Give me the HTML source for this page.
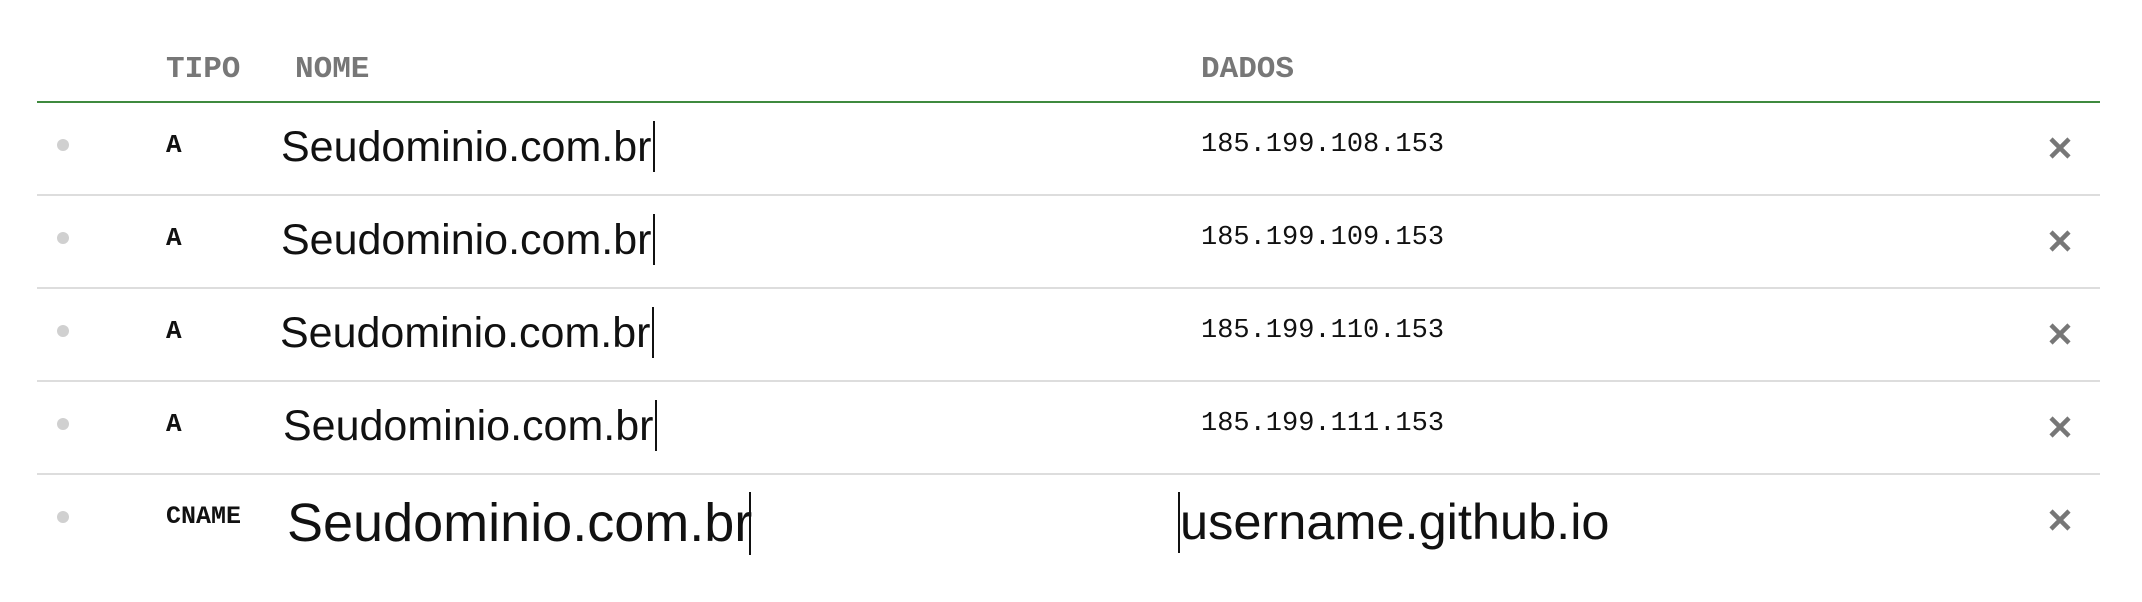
<!DOCTYPE html>
<html><head><meta charset="utf-8"><style>
html,body{margin:0;padding:0;background:#fff;width:2142px;height:602px;overflow:hidden;position:relative}
.a{position:absolute;line-height:1;white-space:nowrap}
.h{font-family:"Liberation Mono",monospace;font-weight:bold;font-size:31px;color:#777;top:54px}
.t{font-family:"Liberation Mono",monospace;font-weight:bold;font-size:26px;color:#111;left:166px}
.n{font-family:"Liberation Sans",sans-serif;font-size:43px;color:#111}
.ip{font-family:"Liberation Mono",monospace;font-size:27px;color:#111;left:1201px}
.line{position:absolute;left:37px;width:2063px;height:2px;background:#ddd}
.dot{position:absolute;left:57px;width:12px;height:12px;border-radius:50%;background:#d0d0d0}
.cur{position:absolute;width:2px;background:#111}
.x{position:absolute;left:2048px;width:24px;height:24px}
</style></head><body>
<div class="a h" style="left:166px">TIPO</div>
<div class="a h" style="left:295px">NOME</div>
<div class="a h" style="left:1201px">DADOS</div>
<div class="line" style="top:101px;background:#3f8a3f"></div>
<div class="line" style="top:194px"></div>
<div class="line" style="top:287px"></div>
<div class="line" style="top:380px"></div>
<div class="line" style="top:473px"></div>

<div class="dot" style="top:139px"></div>
<div class="dot" style="top:232px"></div>
<div class="dot" style="top:325px"></div>
<div class="dot" style="top:418px"></div>
<div class="dot" style="top:511px"></div>

<div class="a t" style="top:132px">A</div>
<div class="a t" style="top:225px">A</div>
<div class="a t" style="top:318px">A</div>
<div class="a t" style="top:411px">A</div>
<div class="a t" style="top:504px;font-size:25px">CNAME</div>

<div class="a n" style="left:281px;top:126px">Seudominio.com.br</div>
<div class="cur" style="left:653px;top:121px;height:51px"></div>
<div class="a n" style="left:281px;top:219px">Seudominio.com.br</div>
<div class="cur" style="left:653px;top:214px;height:51px"></div>
<div class="a n" style="left:280px;top:312px">Seudominio.com.br</div>
<div class="cur" style="left:652px;top:307px;height:51px"></div>
<div class="a n" style="left:283px;top:405px">Seudominio.com.br</div>
<div class="cur" style="left:655px;top:400px;height:51px"></div>
<div class="a n" style="left:287px;top:496px;font-size:54px">Seudominio.com.br</div>
<div class="cur" style="left:749px;top:492px;height:63px"></div>

<div class="a ip" style="top:132px">185.199.108.153</div>
<div class="a ip" style="top:225px">185.199.109.153</div>
<div class="a ip" style="top:318px">185.199.110.153</div>
<div class="a ip" style="top:411px">185.199.111.153</div>
<div class="cur" style="left:1178px;top:492px;height:61px"></div>
<div class="a n" style="left:1180px;top:497px;font-size:50.5px">username.github.io</div>

<svg class="x" style="top:136px" viewBox="0 0 24 24"><path d="M3 3L21 21M21 3L3 21" stroke="#777" stroke-width="4.5"/></svg>
<svg class="x" style="top:229px" viewBox="0 0 24 24"><path d="M3 3L21 21M21 3L3 21" stroke="#777" stroke-width="4.5"/></svg>
<svg class="x" style="top:322px" viewBox="0 0 24 24"><path d="M3 3L21 21M21 3L3 21" stroke="#777" stroke-width="4.5"/></svg>
<svg class="x" style="top:415px" viewBox="0 0 24 24"><path d="M3 3L21 21M21 3L3 21" stroke="#777" stroke-width="4.5"/></svg>
<svg class="x" style="top:508px" viewBox="0 0 24 24"><path d="M3 3L21 21M21 3L3 21" stroke="#777" stroke-width="4.5"/></svg>
</body></html>
